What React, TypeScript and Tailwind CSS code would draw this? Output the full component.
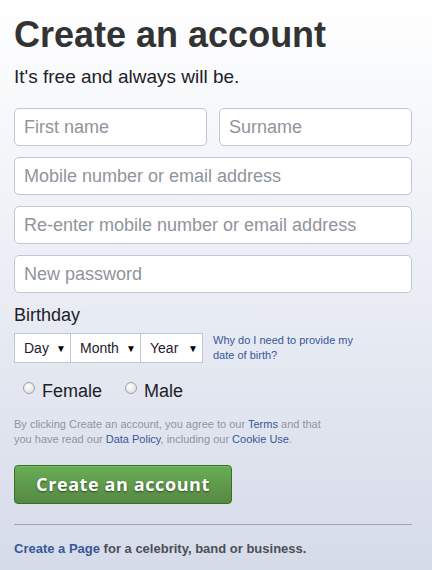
import React from "react";

const Select = ({ label, w, cls }: { label: string; w: string; cls: string }) => (
  <div className={`flex items-center justify-between h-[30px] bg-white border border-[#bdc7d8] pl-[9px] pr-[4px] ${w} ${cls}`}>
    <span className="text-[14px] text-[#1d2129]">{label}</span>
    <span className="text-[10px] text-black">▼</span>
  </div>
);

const Radio = ({ label }: { label: string }) => (
  <label className="flex items-center">
    <span className="w-[12px] h-[12px] rounded-full border border-[#a0a0a0] bg-[radial-gradient(circle_at_40%_35%,#ffffff,#d8d8d8)] mr-[7px] -mt-[6px]" />
    <span className="text-[18px] text-[#1d2129]">{label}</span>
  </label>
);

export default function App() {
  return (
    <div
      className="w-[432px] h-[570px] overflow-hidden bg-[linear-gradient(to_bottom,#ffffff_0%,#eceff5_45%,#d6dbe9_100%)] pl-[14px] pr-[20px] pt-[12px]"
      style={{ fontFamily: '"Liberation Sans", Arial, sans-serif' }}
    >
      <h1 className="text-[36px] font-bold text-[#333333] leading-[46px]">Create an account</h1>
      <p className="text-[19px] text-[#1d2129] mt-[7px] leading-[24px]">It's free and always will be.</p>

      <div className="mt-[19px] flex flex-col gap-[11px]">
        <div className="flex gap-[12px]">
          <div className="flex-1 h-[38px] bg-white border border-[#bdc7d8] rounded-[5px] flex items-center px-[9px] text-[18px] text-[#90949c]">First name</div>
          <div className="flex-1 h-[38px] bg-white border border-[#bdc7d8] rounded-[5px] flex items-center px-[9px] text-[18px] text-[#90949c]">Surname</div>
        </div>
        <div className="h-[38px] bg-white border border-[#bdc7d8] rounded-[5px] flex items-center px-[9px] text-[18px] text-[#90949c]">Mobile number or email address</div>
        <div className="h-[38px] bg-white border border-[#bdc7d8] rounded-[5px] flex items-center px-[9px] text-[18px] text-[#90949c]">Re-enter mobile number or email address</div>
        <div className="h-[38px] bg-white border border-[#bdc7d8] rounded-[5px] flex items-center px-[9px] text-[18px] text-[#90949c]">New password</div>
      </div>

      <div className="mt-[11px] text-[18px] text-[#1d2129] leading-[22px]">Birthday</div>
      <div className="mt-[7px] flex items-center">
        <div className="flex">
          <Select label="Day" w="w-[57px]" cls="" />
          <Select label="Month" w="w-[71px]" cls="-ml-px" />
          <Select label="Year" w="w-[63px]" cls="-ml-px" />
        </div>
        <div className="ml-[10px] text-[11px] leading-[15px] text-[#365899] w-[150px]">
          Why do I need to provide my date of birth?
        </div>
      </div>

      <div className="mt-[16px] flex items-center pl-[9px] gap-[23px] h-[24px]">
        <Radio label="Female" />
        <Radio label="Male" />
      </div>

      <p className="mt-[14px] text-[11px] leading-[15px] text-[#90949c] w-[320px]">
        By clicking Create an account, you agree to our <span className="text-[#365899]">Terms</span> and that you have read our{" "}
        <span className="text-[#365899]">Data Policy</span>, including our <span className="text-[#365899]">Cookie Use</span>.
      </p>

      <button
        className="mt-[18px] w-[218px] h-[39px] rounded-[4px] border border-[#3b6e22] bg-[linear-gradient(to_bottom,#67ae55,#578843)] text-white text-[18px] font-bold flex items-center justify-center tracking-[0.6px] [text-shadow:0_1px_2px_rgba(0,0,0,0.5)] shadow-[inset_0_1px_0_#79bc64]"
        style={{ fontFamily: '"Open Sans", "Liberation Sans", sans-serif' }}
      >
        Create an account
      </button>

      <div className="mt-[20px] h-px bg-[#9aa4c1]" />

      <p className="mt-[14px] text-[13px] font-bold text-[#4b4f56]">
        <span className="text-[#365899]">Create a Page</span> for a celebrity, band or business.
      </p>
    </div>
  );
}
